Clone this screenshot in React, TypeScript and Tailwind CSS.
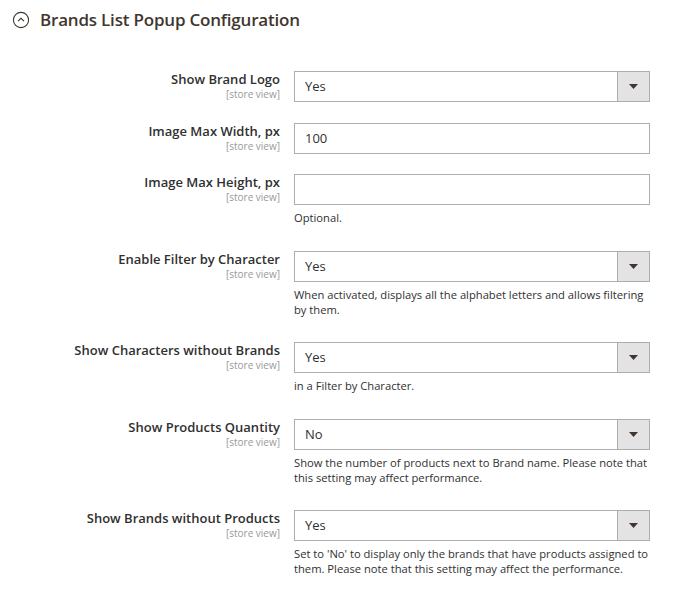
import type { ReactNode } from "react";

type Field = {
  label: string;
  kind: "select" | "text";
  value: string;
  note?: string;
};

const fields: Field[] = [
  { label: "Show Brand Logo", kind: "select", value: "Yes" },
  { label: "Image Max Width, px", kind: "text", value: "100" },
  { label: "Image Max Height, px", kind: "text", value: "", note: "Optional." },
  {
    label: "Enable Filter by Character",
    kind: "select",
    value: "Yes",
    note: "When activated, displays all the alphabet letters and allows filtering by them.",
  },
  {
    label: "Show Characters without Brands",
    kind: "select",
    value: "Yes",
    note: "in a Filter by Character.",
  },
  {
    label: "Show Products Quantity",
    kind: "select",
    value: "No",
    note: "Show the number of products next to Brand name. Please note that this setting may affect performance.",
  },
  {
    label: "Show Brands without Products",
    kind: "select",
    value: "Yes",
    note: "Set to 'No' to display only the brands that have products assigned to them. Please note that this setting may affect the performance.",
  },
];

function Control({ field }: { field: Field }): ReactNode {
  if (field.kind === "select") {
    return (
      <div className="flex h-[31px] w-full border border-[#adadad] bg-white">
        <div className="flex-1 pl-[10px] text-[13px] leading-[29px] text-[#303030]">
          {field.value}
        </div>
        <div className="flex w-[32px] items-center justify-center border-l border-[#adadad] bg-[#e3e3e3]">
          <svg width="9" height="5" viewBox="0 0 9 5">
            <path d="M0 0h9L4.5 5z" fill="#41362f" />
          </svg>
        </div>
      </div>
    );
  }
  return (
    <div className="h-[31px] w-full border border-[#adadad] bg-white pl-[10px] text-[13px] leading-[29px] text-[#303030]">
      {field.value}
    </div>
  );
}

export default function App() {
  return (
    <div className="min-h-screen bg-white font-['Open_Sans',sans-serif] text-[#303030]">
      {/* header */}
      <div className="flex items-center pl-[12px] pt-[11px]">
        <svg width="18" height="18" viewBox="0 0 18 18">
          <circle cx="9" cy="9" r="7.6" fill="none" stroke="#41362f" strokeWidth="1.1" />
          <path d="M6 10.2L9 7.3l3 2.9" fill="none" stroke="#41362f" strokeWidth="1.1" />
        </svg>
        <h2 className="ml-[10px] text-[17px] font-semibold leading-[18px] tracking-[-0.2px] text-[#41362f]">
          Brands List Popup Configuration
        </h2>
      </div>

      {/* fields */}
      <div className="mt-[42px] flex flex-col gap-[20.5px]">
        {fields.map((f) => (
          <div key={f.label} className="flex">
            <div className="w-[280px] shrink-0 text-right">
              <div className="text-[13px] font-semibold leading-[17px] text-[#303030]">
                {f.label}
              </div>
              <div className="mt-[1px] text-[10px] leading-[11px] text-[#999999]">
                [store view]
              </div>
            </div>
            <div className="ml-[14px] w-[356px]">
              <Control field={f} />
              {f.note && (
                <div className="mb-[5px] mt-[5px] text-[11.2px] leading-[15px] text-[#303030]">
                  {f.note}
                </div>
              )}
            </div>
          </div>
        ))}
      </div>
    </div>
  );
}
